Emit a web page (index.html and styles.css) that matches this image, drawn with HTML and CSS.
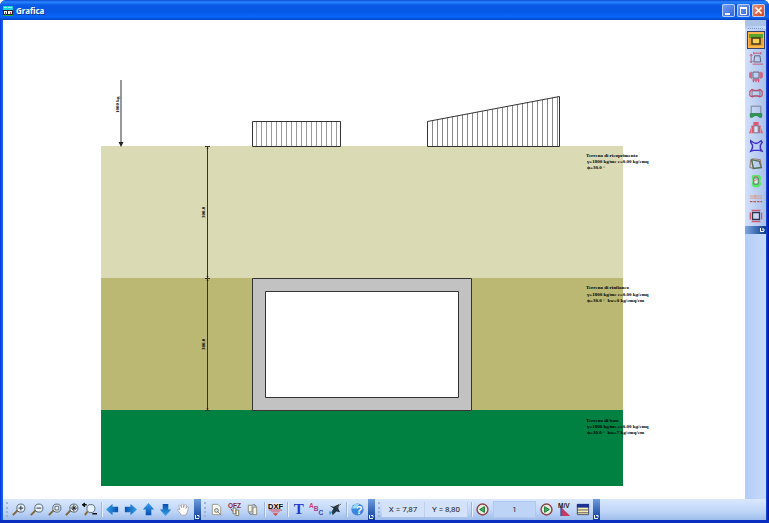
FILE: index.html
```html
<!DOCTYPE html>
<html lang="it">
<head>
<meta charset="utf-8">
<title>Grafica</title>
<link rel="stylesheet" href="styles.css">
</head>
<body>
<div class="window">
  <header class="titlebar">
    <svg class="app-icon" viewBox="0 0 10 10"><path fill="#20d0d8" d="M0 0h10v4H0z"/><path fill="#8ff" d="M1 1h3v1H1zM5 1h4v1H5z"/><path fill="#223" d="M0 4h10v6H0z"/><path fill="#fff" d="M1 5h3v3H1zM5 5h4v3H5z"/><path fill="#d22" d="M2 6h1v3H2zM7 6h1v2H7z"/><path fill="#2a4" d="M0 9h10v1H0z"/></svg>
    <h1>Grafica</h1>
    <div class="window-buttons">
      <button class="win" aria-label="Riduci"><svg viewBox="0 0 13 13"><path fill="#fff" d="M3 9h5v2H3z"/></svg></button>
      <button class="win" aria-label="Ingrandisci"><svg viewBox="0 0 13 13"><path fill="none" stroke="#fff" d="M3.500 4v6.500h6V4"/><path fill="#fff" d="M3 3h7v2H3z"/></svg></button>
      <button class="win close" aria-label="Chiudi"><svg viewBox="0 0 13 13"><path stroke="#fff" stroke-width="1.700" d="M3.500 3.500l6 6M9.500 3.500l-6 6"/></svg></button>
    </div>
  </header>

  <div class="workspace">
    <main class="canvas">
      <svg class="drawing" viewBox="3 20 742 479" preserveAspectRatio="xMinYMin meet">
        <defs>
          <pattern id="hatchA" x="256" y="0" width="5" height="10" patternUnits="userSpaceOnUse"><path d="M.5 0v10" stroke="#999"/></pattern>
          <pattern id="hatchB" x="432" y="0" width="5" height="10" patternUnits="userSpaceOnUse"><path d="M.5 0v10" stroke="#888"/></pattern>
        </defs>
        <path fill="#dadab4" d="M101 146h522v132H101z"/>
        <path fill="#bab873" d="M101 278h522v132H101z"/>
        <path fill="#008142" d="M101 410h522v76H101z"/>
        <g stroke="#333">
          <path fill="url(#hatchA)" d="M252.500 121.500h88v25h-88z"/>
          <path fill="url(#hatchB)" d="M427.500 121.500l132-25v50h-132z"/>
          <path fill="#c2c2c2" d="M252.500 278.500h219v132h-219z"/>
          <path fill="#fff" d="M265.500 291.500h193v106h-193z"/>
          <path fill="none" d="M207.500 146v264M205 146.500h5M205 278.500h5M205 410.500h5M121 80v64"/>
        </g>
        <path fill="#222" d="M118.500 142h5l-2.500 5z"/>
        <path fill="#222" d="M207.500 147l1 2h-2zM207.500 278l1-2h-2zM207.500 279l1 2h-2zM207.500 410l1-2h-2z"/>
        <g class="note">
          <text transform="translate(119 113) rotate(-90)">1000 kg</text>
          <text transform="translate(205 218) rotate(-90)">300.0</text>
          <text transform="translate(205 350) rotate(-90)">300.0</text>
          <text x="586" y="157">Terreno di ricoprimento</text>
          <text x="587" y="163">γ=1800 kg/mc c=0.00 kg/cmq</text>
          <text x="587" y="169">ϕ=30.0 °</text>
          <text x="586" y="289">Terreno di rinfianco</text>
          <text x="587" y="296">γ=1800 kg/mc c=0.00 kg/cmq</text>
          <text x="587" y="302">ϕ=30.0 °&#160; kw=0 kg/cmq/cm</text>
          <text x="586" y="422">Terreno di base</text>
          <text x="587" y="428">γ=1800 kg/mc c=0.00 kg/cmq</text>
          <text x="587" y="434">ϕ=30.0 °&#160; kw=7 kg/cmq/cm</text>
        </g>
      </svg>
    </main>

    <aside class="sidebar">
      <div class="side-head"></div>
      <div class="side-grip"></div>
      <div class="side-tools">
        <button class="tool active" aria-label="Sezione"><svg viewBox="0 0 16 16"><path fill="#59a52c" d="M1 2h14v4H1z"/><path fill="#e8a030" d="M1 6h14v8H1z"/><path fill="#f7cf55" stroke="#432" stroke-width="1.500" d="M4 6h8v6H4z"/></svg></button>
        <button class="tool" aria-label="Quote"><svg viewBox="0 0 16 16" fill="none"><path stroke="#556" d="M6.500 5.500h6l1 7h-8z"/><path stroke="#cc4a68" d="M5 2.500h9M5.500 1v3M13.500 1v3M2.500 4v9M1 5.500l1.500-2L4 5.500M1 11.500l1.500 2 1.500-2M4 15h12"/></svg></button>
        <button class="tool" aria-label="Carichi"><svg viewBox="0 0 16 16" fill="none"><path stroke="#556" d="M4.500 3.500h7v7h-7z"/><path stroke="#d84a6a" stroke-width="1.300" d="M2.500 3v8M1 4v6M13.500 3v8M15 4v6M5 12v3M8 12v3M11 12v3M4 12.500h8"/></svg></button>
        <button class="tool" aria-label="Momento"><svg viewBox="0 0 16 16" fill="none"><path stroke="#667" d="M3.500 5.500h9v6h-9z"/><path stroke="#c83c5a" stroke-width="1.200" d="M3.500 4Q8 6.500 12.500 4L15 6v5l-2.500 1.500Q8 10 3.500 12.500L1 11V6z"/></svg></button>
        <button class="tool" aria-label="Pressioni"><svg viewBox="0 0 16 16" fill="none"><path stroke="#778" d="M2.500 2.500h11v9h-11z"/><path fill="#2d9b55" stroke="#278047" d="M1.500 11v4H4q4-4 8 0h2.500v-4z"/></svg></button>
        <button class="tool" aria-label="Spinte"><svg viewBox="0 0 16 16"><path fill="#dc5870" d="M5 1h6v4H5zM3 5h2v9H0zM11 5h2l3 9h-5z"/><path fill="#dce5f7" stroke="#667" d="M5.500 5.500h5v8h-5z"/><path stroke="#fff" stroke-width=".5" d="M2.500 7v7M13.500 7v7"/></svg></button>
        <button class="tool" aria-label="Diagrammi"><svg viewBox="0 0 16 16" fill="none"><path stroke="#4030c8" stroke-width="1.700" d="M2 2l3 2q3 2 6 0l3-2 1 2-2 3v4l2 3-3-1H5l-3 1 2-4V7L2 4z"/></svg></button>
        <button class="tool" aria-label="Deformata"><svg viewBox="0 0 16 16" fill="none"><path stroke="#54704e" stroke-width="1.700" d="M3 3l9 2 2 7-9 1z"/><path stroke="#9a7060" d="M2 3l-1 9 4 1M2 3l2-1 9 1 1 8"/></svg></button>
        <button class="tool" aria-label="Armature"><svg viewBox="0 0 16 16"><path fill="#58e66d" d="M4 1h8l2 3-1 4 1 4-3 3H5l-2-3 1-4-1-4z"/><path fill="#dcf4e4" stroke="#566" d="M5.500 4.500h5v7h-5z"/><path stroke="#e66" d="M6 3h4M5 8l5-2"/></svg></button>
        <button class="tool" aria-label="Ferri"><svg viewBox="0 0 16 16" fill="none"><path stroke="#dd957c" d="M1 4.500h14M1 7h14M7 3v4"/><path stroke="#c05a50" stroke-width="1.500" stroke-dasharray="3 1" d="M1 11h14"/></svg></button>
        <button class="tool" aria-label="Verifiche"><svg viewBox="0 0 16 16" fill="none"><path stroke="#dd5670" stroke-width="1.500" d="M3 1.500h10M1.500 4v8M14.500 4v8M3 14.500h10"/><path fill="#c9d8f5" stroke="#334" stroke-width="1.500" d="M4 4h8v8H4z"/></svg></button>
      </div>
      <button class="side-cap" aria-label="Opzioni barra"><svg viewBox="0 0 6 6"><path fill="none" stroke="#fff" d="M1.500 1v3.500H5M3 2h2v2"/></svg></button>
    </aside>
  </div>

  <footer class="toolbar">
    <span class="grip"></span>
    <div class="group five">
      <button class="tool" aria-label="Zoom avanti"><svg viewBox="0 0 16 16"><use href="#lens"/><path stroke="#223" d="M8 6.500h5M10.500 4v5"/></svg></button>
      <button class="tool" aria-label="Zoom indietro"><svg viewBox="0 0 16 16"><use href="#lens"/><path stroke="#223" d="M8 6.500h5"/></svg></button>
      <button class="tool" aria-label="Zoom finestra"><svg viewBox="0 0 16 16"><use href="#lens"/><path fill="none" stroke="#567" d="M8.500 4.500h4v4h-4z"/></svg></button>
      <button class="tool" aria-label="Zoom tutto"><svg viewBox="0 0 16 16"><use href="#lens"/><path stroke="#222" d="M7 6.500h7M10.500 3v7M8.500 4.500l4 4M12.500 4.500l-4 4"/></svg></button>
      <button class="tool" aria-label="Zoom precedente"><svg viewBox="0 0 16 16"><circle cx="9.500" cy="7" r="4.300" fill="#e6f1fc" stroke="#567"/><path stroke="#876a30" stroke-width="2" d="M6 10l-3 4"/><path stroke="#111" stroke-width="1.500" d="M0 3h5M3 1L1 3l2 2M11 12.500h5"/></svg></button>
    </div>
    <span class="sep"></span>
    <div class="group five">
      <button class="tool" aria-label="Sinistra"><svg viewBox="0 0 16 16"><use href="#arrow"/></svg></button>
      <button class="tool" aria-label="Destra"><svg viewBox="0 0 16 16"><use href="#arrow" transform="rotate(180 8 8)"/></svg></button>
      <button class="tool" aria-label="Su"><svg viewBox="0 0 16 16"><use href="#arrow" transform="rotate(90 8 8)"/></svg></button>
      <button class="tool" aria-label="Giù"><svg viewBox="0 0 16 16"><use href="#arrow" transform="rotate(270 8 8)"/></svg></button>
      <button class="tool" aria-label="Sposta"><svg viewBox="0 0 16 16"><path fill="#fff" stroke="#998a86" stroke-width=".7" d="M6 14L2 9q-1-2 2-1L3 4q1-2 2 0l1 2V3q1-2 2 0v3l1-3q1-1 2 0l-.5 4 1.500-2q2 0 1 2l-1 4-2 3z"/></svg></button>
    </div>
    <button class="cap" aria-label="Opzioni barra"><svg viewBox="0 0 6 6"><use href="#more"/></svg></button>

    <span class="grip"></span>
    <div class="group three">
      <button class="tool" aria-label="Anteprima"><svg viewBox="0 0 16 16"><path fill="#f8f7ef" stroke="#98988f" d="M3.500 2.500h6l3 3v8h-9z"/><circle cx="8" cy="9" r="2" fill="#d5e5ed" stroke="#776"/><path stroke="#876" d="M9 10l4 4"/></svg></button>
      <button class="tool" aria-label="Copia OFZ"><svg viewBox="0 0 16 16"><text class="glyph tiny" x="1" y="6" fill="#8a2a35">OFZ</text><path fill="#fff6dc" stroke="#776" d="M6.500 6.500h3v6h-3zM9.500 8.500h3v6h-3z"/><path stroke="#934" d="M4 7l2 3"/></svg></button>
      <button class="tool" aria-label="Copia"><svg viewBox="0 0 16 16"><path fill="#f9f4df" stroke="#887" d="M3.500 3.500h4v7h-4zM8.500 5.500h4v8h-4z"/><path fill="none" stroke="#665" d="M4 11q1 3 4 2M8 3q3-1 4 2"/></svg></button>
    </div>
    <span class="sep"></span>
    <button class="tool" aria-label="Esporta DXF"><svg viewBox="0 0 16 16"><path fill="#f4e8e8" d="M1 1h14v6H1z"/><text class="glyph dxf" x="0" y="7">DXF</text><path fill="#d9434e" d="M1 8h14v1H1zM3 10h10l-1 1H4zM5 12h6l-3 3z"/></svg></button>
    <span class="sep"></span>
    <div class="group three">
      <button class="tool" aria-label="Testo"><svg viewBox="0 0 16 16"><text class="glyph letter" x="3" y="13">T</text></svg></button>
      <button class="tool" aria-label="Caratteri"><svg viewBox="0 0 16 16"><text class="glyph abc" fill="#d24664" x="0" y="6">A</text><text class="glyph abc" fill="#a04090" x="5" y="10">B</text><text class="glyph abc" fill="#3940b4" x="10" y="14">C</text></svg></button>
      <button class="tool" aria-label="Colori"><svg viewBox="0 0 16 16"><path fill="#233545" d="M3 4l4 1 6-3-1 5 2 4-4-1-4 4-1-4 2-3z"/><path fill="#3a9ad8" d="M2 10h4l-3 4z"/><path stroke="#654" d="M10 6l5-4"/></svg></button>
    </div>
    <span class="sep"></span>
    <button class="tool" aria-label="Guida"><svg viewBox="0 0 16 16"><circle cx="8" cy="8" r="6.500" fill="#3d86df"/><path fill="#9cdcf5" d="M2 7q2-6 8-5l-4 5z"/><text class="glyph question" x="6" y="13">?</text></svg></button>
    <button class="cap" aria-label="Opzioni barra"><svg viewBox="0 0 6 6"><use href="#more"/></svg></button>

    <span class="grip"></span>
    <output class="coord">X = 7,87</output>
    <output class="coord">Y = 8,80</output>
    <span class="sep"></span>
    <button class="tool" aria-label="Precedente"><svg viewBox="0 0 16 16"><use href="#ring"/><path fill="#43b55d" stroke="#196b35" d="M10 5v6L5 8z"/></svg></button>
    <input class="page" type="text" value="1" aria-label="Combinazione">
    <div class="group three">
      <button class="tool" aria-label="Successiva"><svg viewBox="0 0 16 16"><use href="#ring"/><path fill="#43b55d" stroke="#196b35" d="M6 5v6l5-3z"/></svg></button>
      <button class="tool" aria-label="Sollecitazioni"><svg viewBox="0 0 16 16"><path fill="#c33b60" d="M5 6l9 9H5z"/><path stroke="#4456a0" stroke-width="2" d="M4.500 5v10"/><text class="glyph tiny" x="1" y="6" fill="#222">M/V</text></svg></button>
      <button class="tool" aria-label="Tabella"><svg viewBox="0 0 16 16"><path fill="#f8efb5" stroke="#444a70" d="M2.500 3.500h12v10h-12z"/><path fill="#1d3192" d="M2 2h13v4H2z"/><path stroke="#555" d="M2 8.500h12M2 11.500h12"/></svg></button>
    </div>
    <button class="cap" aria-label="Opzioni barra"><svg viewBox="0 0 6 6"><use href="#more"/></svg></button>
  </footer>
</div>

<svg class="symbols" aria-hidden="true">
  <defs>
    <linearGradient id="blue" x2="1"><stop stop-color="#36a2ee"/><stop offset="1" stop-color="#0750ad"/></linearGradient>
    <g id="lens"><path stroke="#806330" stroke-width="2" d="M7 9l-5 5"/><circle cx="10.500" cy="6.500" r="4.300" fill="#e8f3fb" stroke="#52616d"/></g>
    <path id="arrow" fill="url(#blue)" d="M1 8l7-6v3h6v6H8v3z"/>
    <g id="ring"><circle cx="8" cy="8" r="5.800" fill="#e4f0de" stroke="#90404b" stroke-width="1.500"/></g>
    <path id="more" fill="none" stroke="#fff" d="M1.500 1v3.500H5M3 1.500h2v2"/>
  </defs>
</svg>
</body>
</html>
```
FILE: styles.css
```css
* {
  box-sizing: border-box;
}

body {
  margin: 0;
  background: #fff;
  font-family: Roboto, "Liberation Sans", sans-serif;
  font-size: 8px;
}

button {
  padding: 0;
  border: 0;
  background: none;
}

svg {
  display: block;
}

.window {
  display: flex;
  flex-direction: column;
  height: 100vh;
  padding: 0 3px 3px;
  border-radius: 6px 6px 0 0;
  background: linear-gradient(90deg, #0831d9, #1660e8 2px, #1650e0 calc(100% - 3px), #0019a8 calc(100% - 1px));
  box-shadow: inset 0 -3px #0a2fc0;
  overflow: hidden;
}

.titlebar {
  display: flex;
  align-items: center;
  gap: 3px;
  flex: none;
  height: 20px;
  margin: 0 -3px;
  padding: 1px 4px 0 3px;
  background: linear-gradient(#0a4ad2, #2b86ff 2px, #0a5be6 5px, #0557e4 11px, #0866fb 17px, #0442bd);
  color: #fff;
}

.titlebar h1 {
  flex: 1;
  margin: 0;
  font: bold 8px "Noto Sans", sans-serif;
  text-shadow: 1px 1px #0b3590;
}

.app-icon {
  width: 10px;
  height: 10px;
}

.window-buttons {
  display: flex;
  gap: 2px;
}

.win {
  width: 13px;
  height: 13px;
  border-radius: 2px;
  background: linear-gradient(135deg, #7ba4f5, #2a60dd);
  box-shadow: inset 0 0 0 1px #b7cefa;
}

.win.close {
  background: linear-gradient(135deg, #f19a7c, #cf3d18);
}

.workspace {
  display: flex;
  flex: 1;
  min-height: 0;
}

.canvas {
  flex: 1;
  min-width: 0;
  background: #fff;
}

.drawing {
  width: 100%;
  height: 100%;
}

.note {
  font: bold 5px "Liberation Serif", serif;
  fill: #000;
}

.sidebar {
  width: 21px;
  background: linear-gradient(90deg, #b4ccf6, #c6dafa);
}

.side-head {
  height: 6px;
  background: #a9c2e6;
}

.side-grip {
  height: 3px;
  margin: 0 3px;
  border-bottom: 1px dotted #7e95c4;
}

.side-tools {
  display: flex;
  flex-direction: column;
  justify-content: space-between;
  align-items: center;
  height: 197px;
  padding: 2px 0 1px;
  background: linear-gradient(90deg, #d2e1fa, #a9c0eb);
}

.tool {
  display: grid;
  place-items: center;
  flex: none;
  width: 17px;
  height: 17px;
}

.tool svg {
  width: 15px;
  height: 15px;
}

.side-tools .tool svg {
  width: 14px;
  height: 14px;
}

.side-tools .tool.active {
  width: 18px;
  height: 18px;
  border: 1px solid #35406e;
  background: #ffb64c;
}

.side-tools .tool.active svg {
  width: 16px;
  height: 16px;
}

.side-cap {
  display: flex;
  justify-content: flex-end;
  width: 100%;
  height: 8px;
  padding: 1px;
  background: linear-gradient(90deg, #7ea7e2, #083a88);
}

.side-cap svg,
.cap svg {
  width: 6px;
  height: 6px;
}

.toolbar {
  display: flex;
  align-items: center;
  flex: none;
  height: 21px;
  background: linear-gradient(#d9e8fc, #bfd5f7 60%, #9dbceb);
}

.grip {
  width: 2px;
  height: 15px;
  margin: 0 2px 0 3px;
  border-left: 2px dotted #9db4da;
}

.group {
  display: flex;
  justify-content: space-between;
}

.five {
  width: 88px;
}

.three {
  width: 53px;
}

.sep {
  width: 1px;
  height: 15px;
  margin: 0 2px 0 3px;
  background: #9cb4de;
  box-shadow: 1px 0 #e5effd;
}

.cap {
  display: flex;
  align-items: flex-end;
  width: 7px;
  height: 21px;
  margin-left: 2px;
  background: linear-gradient(#6f9de0, #0a3c94);
}

.coord {
  width: 43px;
  height: 15px;
  border-right: 1px solid #bfd0ec;
  background: #d3e2f8;
  color: #223;
  line-height: 15px;
  text-align: center;
}

.page {
  width: 43px;
  height: 17px;
  margin: 0 2px;
  padding: 0;
  border: 1px solid #b0c8ee;
  background: #bdd4f7;
  color: #223;
  font: inherit;
  text-align: center;
}

.glyph {
  font-family: "Liberation Sans", sans-serif;
  font-weight: bold;
}

.tiny {
  font-size: 7px;
}

.dxf {
  font-size: 8px;
}

.abc {
  font-size: 7px;
}

.letter {
  fill: #1f38d6;
  font-family: "Liberation Serif", serif;
  font-size: 16px;
}

.question {
  fill: #fff;
  font-size: 12px;
}

.symbols {
  position: absolute;
  width: 0;
  height: 0;
}
```
